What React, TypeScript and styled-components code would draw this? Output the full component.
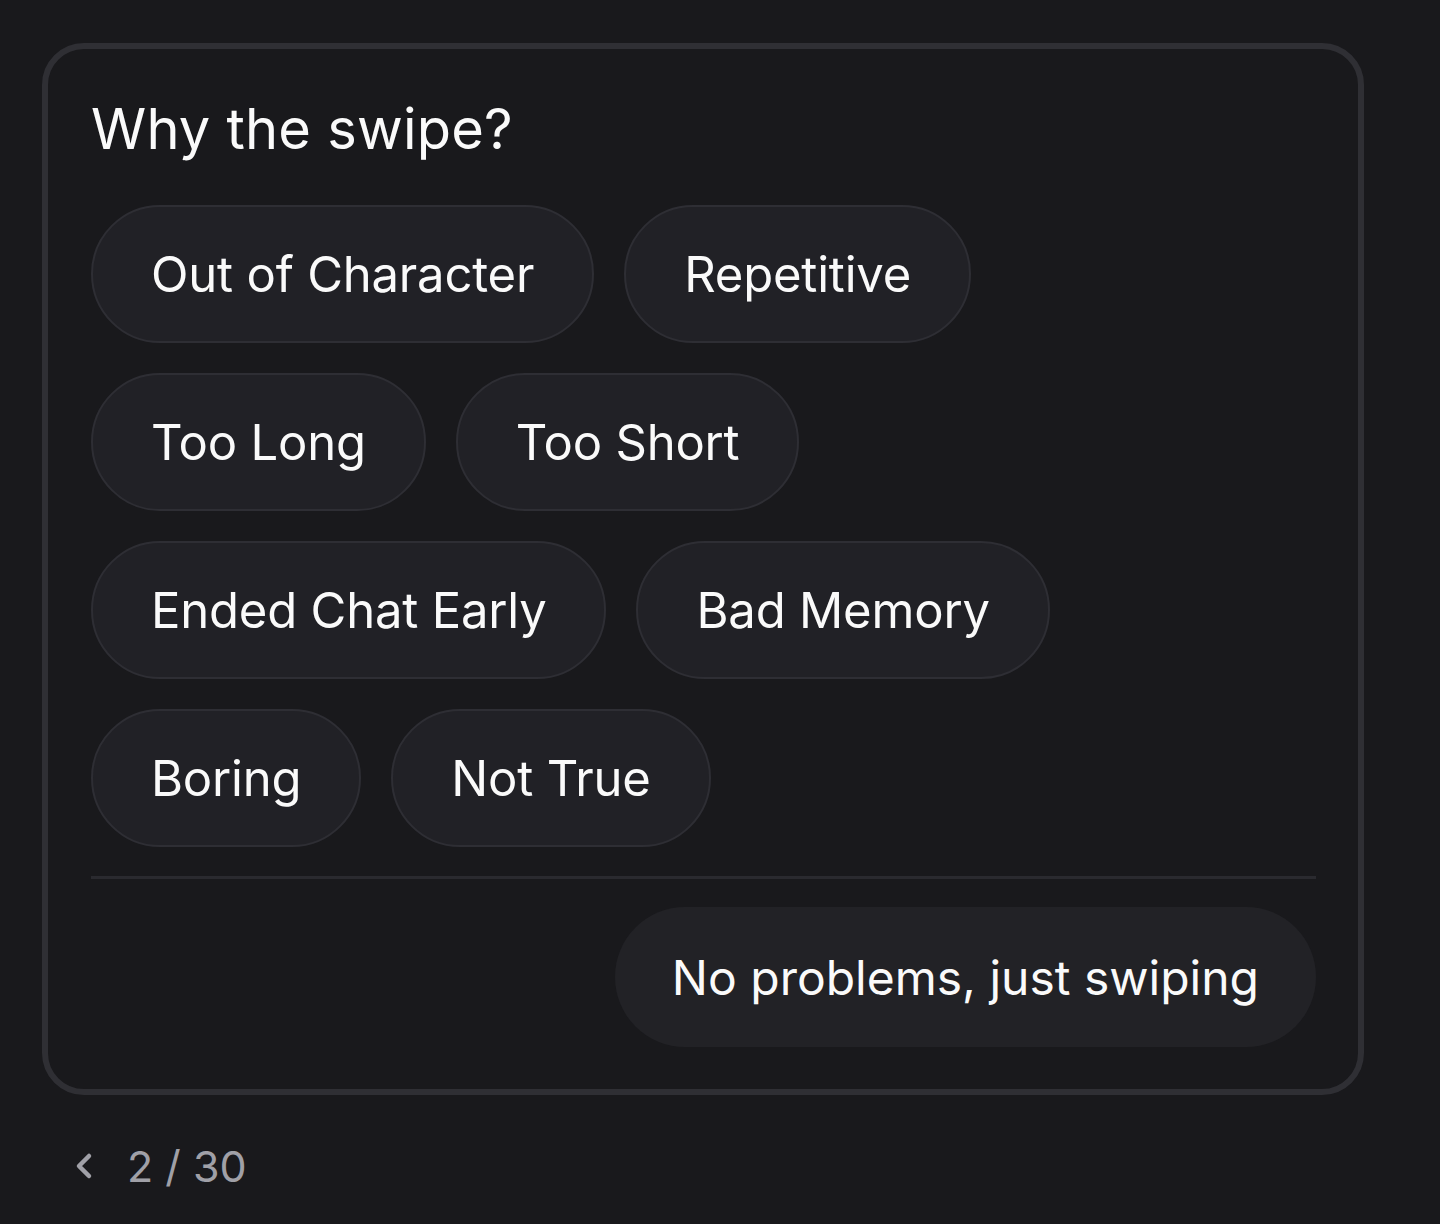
import styled, { createGlobalStyle } from "styled-components";
import { ChevronLeft } from "lucide-react";

const GlobalStyle = createGlobalStyle`
  html, body {
    margin: 0;
    padding: 0;
    background: #19191c;
  }

  body {
    font-family: Inter, "Noto Sans", sans-serif;
    color: #fafafa;
  }
`;

const Page = styled.div`
  width: 1440px;
  height: 1224px;
  padding: 43px 0 0 42px;
  box-sizing: border-box;
`;

const Card = styled.div`
  width: 1322px;
  box-sizing: border-box;
  border: 6px solid #2f2f34;
  border-radius: 42px;
  background: #19191c;
  padding: 42px 42px 42px 43px;
  display: flex;
  flex-direction: column;
`;

const Title = styled.h2`
  margin: 0 0 38px;
  font-size: 56px;
  font-weight: 400;
  line-height: 76px;
  letter-spacing: 0.2px;
`;

const Chips = styled.div`
  display: flex;
  flex-wrap: wrap;
  gap: 30px;
`;

const Chip = styled.button`
  height: 138px;
  box-sizing: border-box;
  padding: 0 58px;
  border: 2px solid #2e2e34;
  border-radius: 69px;
  background: #212126;
  color: #fafafa;
  font-family: inherit;
  font-size: 49px;
  font-weight: 400;
  letter-spacing: -0.2px;
  cursor: pointer;
`;

const Divider = styled.hr`
  margin: 29px 0 28px;
  border: none;
  height: 3px;
  background: #2a2a2f;
`;

const Footer = styled.div`
  display: flex;
  justify-content: flex-end;
`;

const SkipButton = styled.button`
  height: 140px;
  box-sizing: border-box;
  padding: 0 57px;
  border: none;
  border-radius: 70px;
  background: #222226;
  color: #fafafa;
  font-family: inherit;
  font-size: 48px;
  font-weight: 400;
  cursor: pointer;
`;

const Pager = styled.div`
  display: flex;
  align-items: center;
  gap: 23px;
  margin: 45px 0 0 22px;
  color: #a0a0a7;
  font-size: 43px;
  line-height: 52px;
`;

const reasons = [
  "Out of Character",
  "Repetitive",
  "Too Long",
  "Too Short",
  "Ended Chat Early",
  "Bad Memory",
  "Boring",
  "Not True",
];

export default function App() {
  return (
    <>
      <GlobalStyle />
      <Page>
        <Card>
          <Title>Why the swipe?</Title>
          <Chips>
            {reasons.map((r) => (
              <Chip key={r}>{r}</Chip>
            ))}
          </Chips>
          <Divider />
          <Footer>
            <SkipButton>No problems, just swiping</SkipButton>
          </Footer>
        </Card>
        <Pager>
          <ChevronLeft size={40} strokeWidth={2.7} />
          <span>2 / 30</span>
        </Pager>
      </Page>
    </>
  );
}
